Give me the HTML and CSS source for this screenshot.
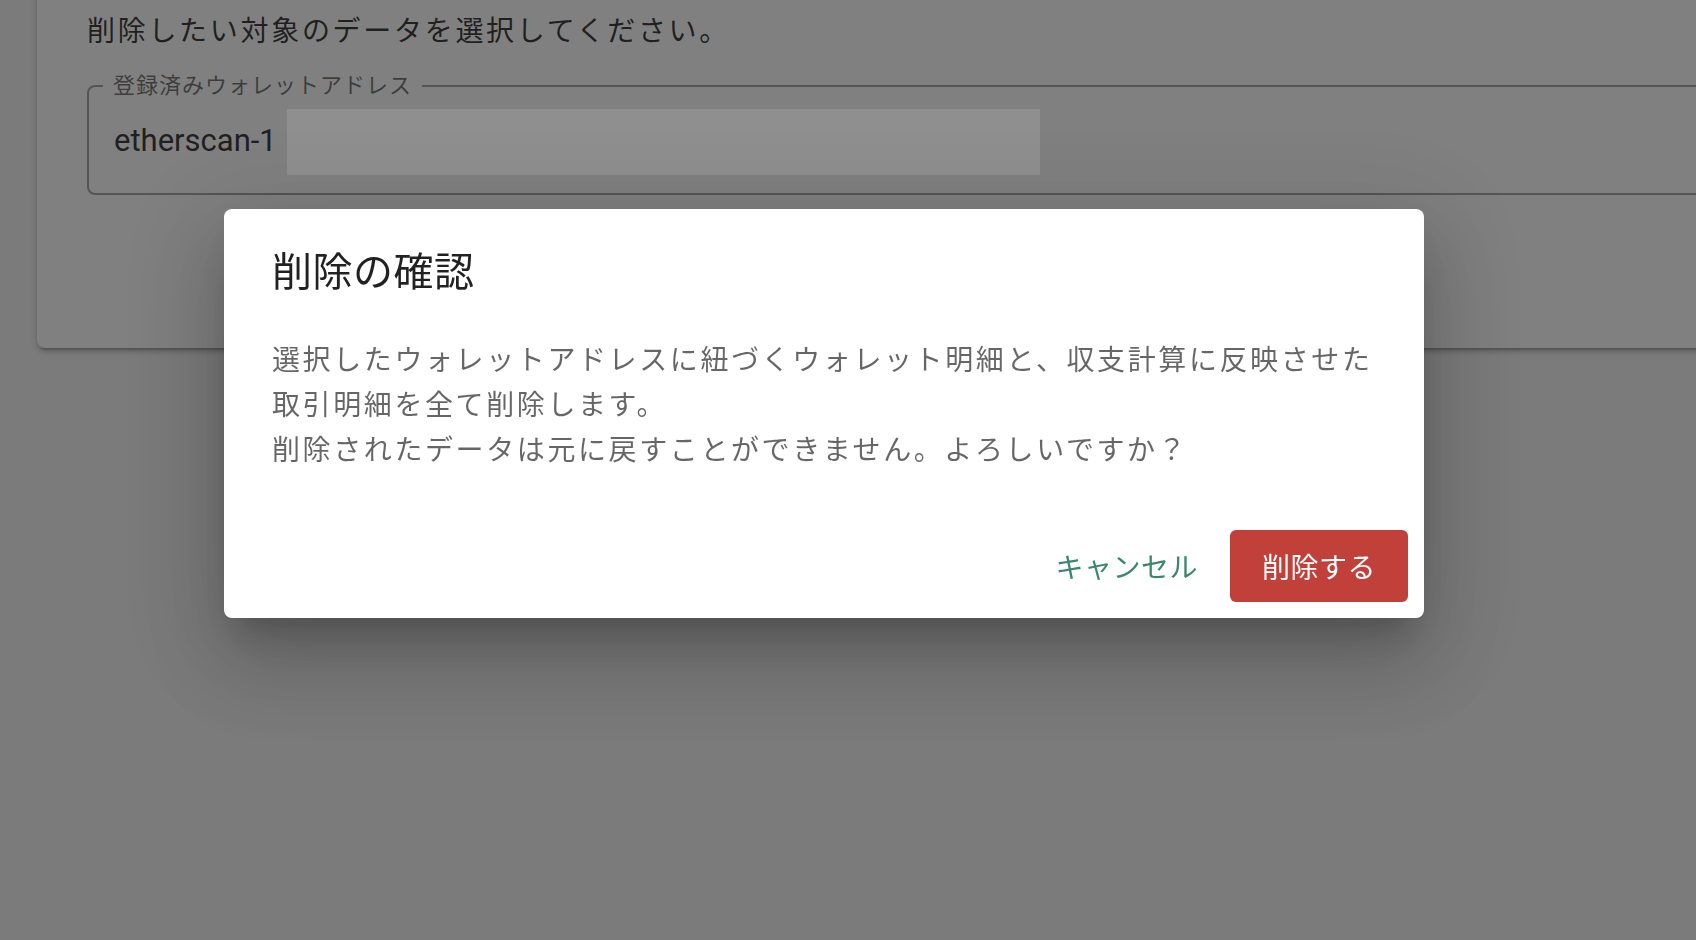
FILE: index.html
```html
<!DOCTYPE html>
<html lang="ja">
<head>
    <meta charset="UTF-8">
    <meta name="viewport" content="width=device-width, initial-scale=1.0">
    <title>ウォレットアドレスの削除</title>
    <link rel="stylesheet" href="styles.css">
</head>
<body>

    <!-- 背景のカード -->
    <div class="card">
        <p class="lead">削除したい対象のデータを選択してください。</p>

        <fieldset class="outlined">
            <legend>登録済みウォレットアドレス</legend>
            <div class="field-row">
                <span class="field-value">etherscan-1</span>
                <div class="field-fill"></div>
            </div>
        </fieldset>
    </div>

    <!-- 削除確認ダイアログ -->
    <div class="overlay">
        <div class="dialog">
            <h2 class="dialog-title">削除の確認</h2>
            <div class="dialog-text">
                選択したウォレットアドレスに紐づくウォレット明細と、収支計算に反映させた取引明細を全て削除します。<br>
                削除されたデータは元に戻すことができません。よろしいですか？
            </div>
            <div class="dialog-actions">
                <button class="btn btn-text">キャンセル</button>
                <button class="btn btn-danger">削除する</button>
            </div>
        </div>
    </div>

</body>
</html>
```

FILE: styles.css
```css
body {
    margin: 0;
    padding: 0;
    background-color: #c8c8c8;
    font-family: Roboto, "Noto Sans CJK JP", sans-serif;
    color: rgba(0, 0, 0, 0.87);
    overflow: hidden;
    height: 100vh;
}

.card {
    margin: -40px -80px 0 37px;
    padding: 50px 0 153px 50px;
    background-color: #d1d1d1;
    border-radius: 8px;
    box-shadow: 0 6px 2px -4px rgba(0, 0, 0, 0.2), 0 4px 4px 0 rgba(0, 0, 0, 0.14), 0 2px 10px 0 rgba(0, 0, 0, 0.12);
}

.lead {
    margin: 0;
    font-size: 28px;
    line-height: 44px;
    letter-spacing: 2.7px;
}

.outlined {
    margin: 19px 0 0 0;
    padding: 0;
    border: 2px solid rgba(0, 0, 0, 0.38);
    border-radius: 8px;
}

.outlined legend {
    margin-left: 14px;
    padding: 0 10px;
    font-size: 22px;
    line-height: 26px;
    letter-spacing: 1px;
    color: rgba(0, 0, 0, 0.6);
}

.field-row {
    display: flex;
    align-items: center;
    gap: 10px;
    padding: 10px 0 18px 25px;
}

.field-value {
    margin-bottom: 4px;
    font-size: 31px;
    color: rgba(0, 0, 0, 0.87);
}

.field-fill {
    width: 753px;
    height: 66px;
    background-color: #ededed;
}

/* Dialog */
.overlay {
    position: fixed;
    inset: 0;
    background-color: rgba(33, 33, 33, 0.46);
    display: flex;
    align-items: flex-start;
    padding: 209px 0 0 224px;
}

.dialog {
    width: 1200px;
    background-color: #ffffff;
    border-radius: 8px;
    box-shadow: 0 22px 30px -14px rgba(0, 0, 0, 0.2), 0 48px 76px 6px rgba(0, 0, 0, 0.14), 0 18px 92px 16px rgba(0, 0, 0, 0.12);
}

.dialog-title {
    margin: 0;
    padding: 32px 48px 20px;
    font-size: 40px;
    font-weight: 400;
    line-height: 64px;
    letter-spacing: 0.5px;
    color: rgba(0, 0, 0, 0.87);
}

.dialog-text {
    padding: 13px 48px 39px;
    font-size: 28px;
    line-height: 45px;
    letter-spacing: 2.6px;
    color: rgba(0, 0, 0, 0.6);
}

.dialog-actions {
    display: flex;
    justify-content: flex-end;
    padding: 18px 16px 16px;
}

.btn {
    height: 72px;
    padding: 0 32px;
    border: none;
    border-radius: 6px;
    font-family: Roboto, "Noto Sans CJK JP", sans-serif;
    font-size: 28px;
    letter-spacing: 0.5px;
    cursor: pointer;
}

.btn-text {
    background-color: transparent;
    color: #3c876c;
}

.btn-danger {
    background-color: #c1403a;
    color: #ffffff;
}
```
